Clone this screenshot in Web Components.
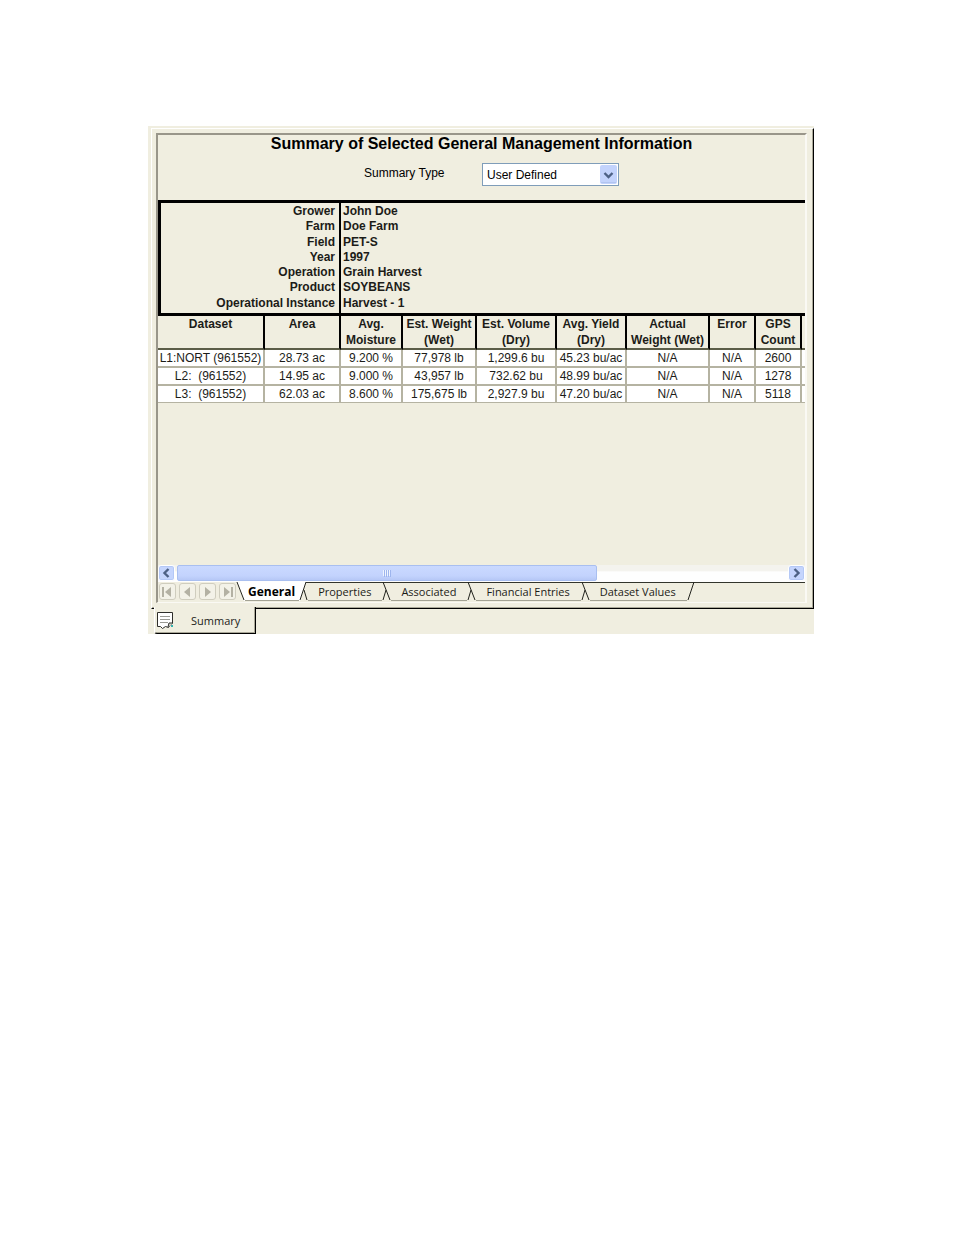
<!DOCTYPE html>
<html lang="en">
<head>
<meta charset="utf-8">
<title>Summary</title>
<style>
    body {
        margin: 0;
        padding: 126px 140px 40px 148px;
        background-color: white;
        color: #1c1c18;
        font-family: "Liberation Sans", Arial, sans-serif;
        font-size: 12px;
    }
</style>
</head>
<body>

<summary-window>
    <summary-header slot="header" heading="Summary of Selected General Management Information"></summary-header>
    <management-details></management-details>
    <dataset-grid></dataset-grid>
    <scroll-bar slot="footer"></scroll-bar>
    <sheet-tabs slot="footer"></sheet-tabs>
    <dock-tab slot="dock">Summary</dock-tab>
</summary-window>

<script>
const windowTemplate = document.createElement('template');
windowTemplate.innerHTML = `
<style>
    :host {
        display: block;
        background-color: #f0eee0;
        padding: 2px 0 0 3px;
    }

    .raised {
        border: 1px solid;
        border-color: white black black white;
    }

    .edge {
        border: solid #aaa898;
        border-width: 0 1px 1px 0;
        padding: 4px 5px 4px 4px;
    }

    .sunken {
        display: flex;
        flex-direction: column;
        min-height: 467px;
        border-style: solid;
        border-width: 2px 2px 1px 2px;
        border-color: #99968a #faf9f4 #faf9f4 #99968a;
        overflow: hidden;
    }

    .content {
        flex: 1;
    }

    .dock {
        display: flex;
        height: 25px;
        padding-left: 3px;
    }
</style>

<div class="raised">
    <div class="edge">
        <div class="sunken">
            <slot name="header"></slot>
            <div class="content"><slot></slot></div>
            <slot name="footer"></slot>
        </div>
    </div>
</div>
<div class="dock"><slot name="dock"></slot></div>
`;

class SummaryWindow extends HTMLElement
{
    constructor()
    {
        super();
        this.attachShadow({mode: 'open'});
        this.shadowRoot.appendChild(windowTemplate.content.cloneNode(true));
    }
}

const headerTemplate = document.createElement('template');
headerTemplate.innerHTML = `
<style>
    :host {
        display: flex;
        flex-direction: column;
        align-items: center;
        height: 65px;
        color: black;
    }

    h1 {
        margin: 0;
        font-size: 16px;
        line-height: 18px;
        white-space: nowrap;
    }

    .type-row {
        display: flex;
        align-items: center;
        margin-top: 10px;
        padding-left: 20px;
    }

    label {
        width: 118px;
        line-height: 20px;
        padding-bottom: 3px;
    }

    .combo {
        position: relative;
        width: 137px;
        height: 23px;
    }

    select {
        appearance: none;
        box-sizing: border-box;
        width: 100%;
        height: 100%;
        margin: 0;
        padding: 0 20px 0 4px;
        border: 1px solid #7f9db9;
        border-radius: 0;
        background-color: white;
        color: black;
        font: inherit;
    }

    svg {
        position: absolute;
        top: 2px;
        right: 2px;
        pointer-events: none;
    }
</style>

<h1></h1>
<div class="type-row">
    <label for="summary-type">Summary Type</label>
    <div class="combo">
        <select id="summary-type"><option>User Defined</option></select>
        <svg width="17" height="19" viewBox="0 0 17 19">
            <rect x="0" y="0" width="17" height="19" rx="2" fill="#c3d3fc"/>
            <path d="M1 17.500h15" stroke="#b1c4f0" fill="none"/>
            <path d="M4.500 8l4 4 4-4" stroke="#4d6185" stroke-width="2.400" fill="none"/>
        </svg>
    </div>
</div>
`;

class SummaryHeader extends HTMLElement
{
    constructor()
    {
        super();
        this.attachShadow({mode: 'open'});
        this.shadowRoot.appendChild(headerTemplate.content.cloneNode(true));
    }

    connectedCallback()
    {
        this.shadowRoot.querySelector('h1').textContent = this.getAttribute('heading');
    }
}

const details = [
    ['Grower', 'John Doe'],
    ['Farm', 'Doe Farm'],
    ['Field', 'PET-S'],
    ['Year', '1997'],
    ['Operation', 'Grain Harvest'],
    ['Product', 'SOYBEANS'],
    ['Operational Instance', 'Harvest - 1']
];

const detailsTemplate = document.createElement('template');
detailsTemplate.innerHTML = `
<style>
    :host {
        display: block;
        border: solid black;
        border-width: 3px 0 0 3px;
    }

    table {
        width: 100%;
        height: 110px;
        border-spacing: 0;
        font-weight: bold;
        line-height: 15px;
    }

    th {
        width: 174px;
        padding: 0 4px 0 0;
        border-right: 2px solid black;
        text-align: right;
    }

    td {
        padding: 0 0 0 2px;
    }

    tr:first-child > * {
        padding-top: 1px;
    }

    tr:last-child > * {
        padding-bottom: 2px;
    }
</style>
<table><tbody></tbody></table>
`;

class ManagementDetails extends HTMLElement
{
    constructor()
    {
        super();
        this.attachShadow({mode: 'open'});
        this.shadowRoot.appendChild(detailsTemplate.content.cloneNode(true));

        this.shadowRoot.querySelector('tbody').innerHTML = details
            .map(([name, value]) => `<tr><th scope="row">${name}</th><td>${value}</td></tr>`)
            .join('');
    }
}

const columns = [
    ['Dataset', 107],
    ['Area', 76],
    ['Avg.<br>Moisture', 62],
    ['Est. Weight<br>(Wet)', 74],
    ['Est. Volume<br>(Dry)', 80],
    ['Avg. Yield<br>(Dry)', 70],
    ['Actual<br>Weight (Wet)', 83],
    ['Error', 46],
    ['GPS<br>Count', 46]
];

const rows = [
    ['L1:NORT (961552)', '28.73 ac', '9.200 %', '77,978 lb', '1,299.6 bu', '45.23 bu/ac', 'N/A', 'N/A', '2600'],
    ['L2:&nbsp; (961552)', '14.95 ac', '9.000 %', '43,957 lb', '732.62 bu', '48.99 bu/ac', 'N/A', 'N/A', '1278'],
    ['L3:&nbsp; (961552)', '62.03 ac', '8.600 %', '175,675 lb', '2,927.9 bu', '47.20 bu/ac', 'N/A', 'N/A', '5118']
];

const gridTemplate = document.createElement('template');
gridTemplate.innerHTML = `
<style>
    :host {
        display: block;
    }

    table {
        table-layout: fixed;
        width: 100%;
        border-spacing: 0;
        border-top: 3px solid black;
    }

    th, td {
        padding: 0;
        text-align: center;
        white-space: nowrap;
    }

    th {
        height: 32px;
        line-height: 16px;
        vertical-align: top;
        border-right: 2px solid black;
        border-bottom: 2px solid #5b5d48;
    }

    td {
        height: 16px;
        line-height: 16px;
        background-color: white;
        border-right: 2px solid #b5b3a2;
        border-bottom: 2px solid #b5b3a2;
    }

    tr:last-child td {
        height: 15px;
        border-bottom-width: 1px;
    }

    th:last-child, td:last-child {
        border-right: none;
    }
</style>
<table>
    <colgroup></colgroup>
    <thead></thead>
    <tbody></tbody>
</table>
`;

class DatasetGrid extends HTMLElement
{
    constructor()
    {
        super();
        this.attachShadow({mode: 'open'});
        this.shadowRoot.appendChild(gridTemplate.content.cloneNode(true));

        // The last column has no width of its own, it takes what is left
        this.shadowRoot.querySelector('colgroup').innerHTML =
            columns.map(([, width]) => `<col style="width: ${width}px">`).join('') + '<col>';

        this.shadowRoot.querySelector('thead').innerHTML =
            '<tr>' + columns.map(([name]) => `<th scope="col">${name}</th>`).join('') + '<th></th></tr>';

        this.shadowRoot.querySelector('tbody').innerHTML = rows
            .map(row => '<tr>' + row.map(cell => `<td>${cell}</td>`).join('') + '<td></td></tr>')
            .join('');
    }
}

const scrollTemplate = document.createElement('template');
scrollTemplate.innerHTML = `
<style>
    :host {
        display: flex;
        height: 17px;
        background: linear-gradient(#f4f3ee 35%, #fefefe 40%);
    }

    button {
        width: 17px;
        height: 16px;
        padding: 0;
        border: 1px solid white;
        border-radius: 3px;
        background-color: #c5d5fd;
        box-shadow: inset 0 0 0 1px #b4c8f6;
    }

    button svg {
        display: block;
        margin: auto;
    }

    .track {
        flex: 1;
        padding: 0 2px;
    }

    .thumb {
        display: flex;
        align-items: center;
        justify-content: center;
        box-sizing: border-box;
        width: 69%;
        height: 16px;
        border: 1px solid #a9bff0;
        border-radius: 2px;
        background: linear-gradient(#cad9ff, #c3d3fd 70%, #b6c8f6);
    }
</style>
<button type="button" aria-label="Scroll left">
    <svg width="11" height="12"><path d="M7.500 2l-4 4 4 4" stroke="#4d6185" stroke-width="2.400" fill="none"/></svg>
</button>
<div class="track">
    <div class="thumb">
        <svg width="9" height="8"><path d="M.5 1v6M2.500 1v6M4.500 1v6M6.500 1v6" stroke="#eef4fe"/><path d="M1.500 1v7M3.500 1v7M5.500 1v7M7.500 1v7" stroke="#9db5ee"/></svg>
    </div>
</div>
<button type="button" aria-label="Scroll right">
    <svg width="11" height="12"><path d="M3.500 2l4 4-4 4" stroke="#4d6185" stroke-width="2.400" fill="none"/></svg>
</button>
`;

class ScrollBar extends HTMLElement
{
    constructor()
    {
        super();
        this.attachShadow({mode: 'open'});
        this.shadowRoot.appendChild(scrollTemplate.content.cloneNode(true));
    }
}

const tabsTemplate = document.createElement('template');
tabsTemplate.innerHTML = `
<style>
    :host {
        display: flex;
        height: 20px;
        color: #1c1c18;
        font-family: "Open Sans", "Noto Sans", sans-serif;
        font-size: 11px;
    }

    button {
        padding: 0;
        border: none;
        background: none;
        color: inherit;
        font: inherit;
    }

    svg {
        display: block;
        flex: none;
    }

    .nav {
        display: flex;
        gap: 3px;
        width: 77px;
        padding: 1px 0 0 1px;
    }

    .nav button {
        width: 17px;
        height: 17px;
        border: 1px solid #cfcdbe;
        border-radius: 3px;
        background-color: #f3f2e8;
    }

    .sheets {
        display: flex;
        flex: 1;
    }

    .rest {
        flex: 1;
        height: 1px;
        background-color: #33352c;
    }

    .sheet {
        height: 19px;
        padding: 0 11px 0 10px;
        border-top: 1px solid #33352c;
        border-bottom: 1px solid #a3a294;
        line-height: 17px;
        white-space: nowrap;
    }

    .sheet.active {
        padding: 0 4px 0 3px;
        border-top-color: white;
        background-color: white;
        color: black;
        font-size: 12px;
        font-weight: bold;
    }
</style>
<div class="nav">
    <button type="button" aria-label="First sheet"><svg width="15" height="15"><path d="M3 3v10" stroke="#b3b1a3" stroke-width="2"/><path d="M11 3v10l-6-5z" fill="#b3b1a3"/></svg></button>
    <button type="button" aria-label="Previous sheet"><svg width="15" height="15"><path d="M10 3v10l-6-5z" fill="#b3b1a3"/></svg></button>
    <button type="button" aria-label="Next sheet"><svg width="15" height="15"><path d="M5 3v10l6-5z" fill="#b3b1a3"/></svg></button>
    <button type="button" aria-label="Last sheet"><svg width="15" height="15"><path d="M4 3v10l6-5z" fill="#b3b1a3"/><path d="M12 3v10" stroke="#b3b1a3" stroke-width="2"/></svg></button>
</div>
<div class="sheets"></div>
`;

const dividers = {
    first: '<path d="M1 0h8v19h-1z" fill="white"/><path d="M1 0l7 18" stroke="#22231d" fill="none"/>',
    afterActive: '<path d="M0 0h7l-6 19h-1z" fill="white"/><path d="M7 .5h2" stroke="#33352c"/><path d="M7 0l-6 18M5 8l3 10" stroke="#22231d" fill="none"/>',
    between: '<path d="M0 .5h9" stroke="#33352c"/><path d="M1 0l7 18M1 18l3-10" stroke="#22231d" fill="none"/>',
    last: '<path d="M0 .5h9" stroke="#33352c"/><path d="M7 0l-6 18" stroke="#22231d" fill="none"/>'
};

class SheetTabs extends HTMLElement
{
    constructor()
    {
        super();
        this.attachShadow({mode: 'open'});
        this.shadowRoot.appendChild(tabsTemplate.content.cloneNode(true));

        const sheets = ['General', 'Properties', 'Associated', 'Financial Entries', 'Dataset Values'];
        let html = this.divider('first');

        sheets.forEach((name, i) =>
        {
            let kind = (i === 0) ? 'afterActive' : (i === sheets.length - 1) ? 'last' : 'between';
            html += `<button type="button" class="sheet${i === 0 ? ' active' : ''}">${name}</button>` + this.divider(kind);
        });

        this.shadowRoot.querySelector('.sheets').innerHTML = html + '<div class="rest"></div>';
    }

    divider(kind)
    {
        return `<svg width="9" height="19">${dividers[kind]}</svg>`;
    }
}

const dockTemplate = document.createElement('template');
dockTemplate.innerHTML = `
<style>
    :host {
        display: block;
        position: relative;
        width: 102px;
        height: 27px;
        margin-top: -2px;
    }

    button {
        display: flex;
        align-items: center;
        gap: 17px;
        width: 100%;
        height: 100%;
        padding: 0 0 0 2px;
        border: 1px solid;
        border-top: none;
        border-color: white black black white;
        border-radius: 0 0 0 3px;
        box-shadow: inset -1px -1px #aaa898;
        background-color: #f0eee0;
        color: #1c1c18;
        font-family: "Open Sans", "Noto Sans", sans-serif;
        font-size: 11px;
    }
</style>
<button type="button">
    <svg width="17" height="17">
        <path d="M.5 .5h15v11l-2 1-2 3-3-1-3 2-2-2h-3z" fill="white" stroke="#2e2e2a"/>
        <path d="M3 4.500h10M3 7.500h10M3 10.500h8" stroke="#9a9a94"/>
        <path d="M11 15l1-4h4" fill="#d8d8d0" stroke="#2e2e2a"/>
        <path d="M14 13h2v2h-2z" fill="#35b5b0"/>
    </svg>
    <span><slot></slot></span>
</button>
`;

class DockTab extends HTMLElement
{
    constructor()
    {
        super();
        this.attachShadow({mode: 'open'});
        this.shadowRoot.appendChild(dockTemplate.content.cloneNode(true));
    }
}

window.customElements.define('summary-window', SummaryWindow);
window.customElements.define('summary-header', SummaryHeader);
window.customElements.define('management-details', ManagementDetails);
window.customElements.define('dataset-grid', DatasetGrid);
window.customElements.define('scroll-bar', ScrollBar);
window.customElements.define('sheet-tabs', SheetTabs);
window.customElements.define('dock-tab', DockTab);
</script>
</body>
</html>
